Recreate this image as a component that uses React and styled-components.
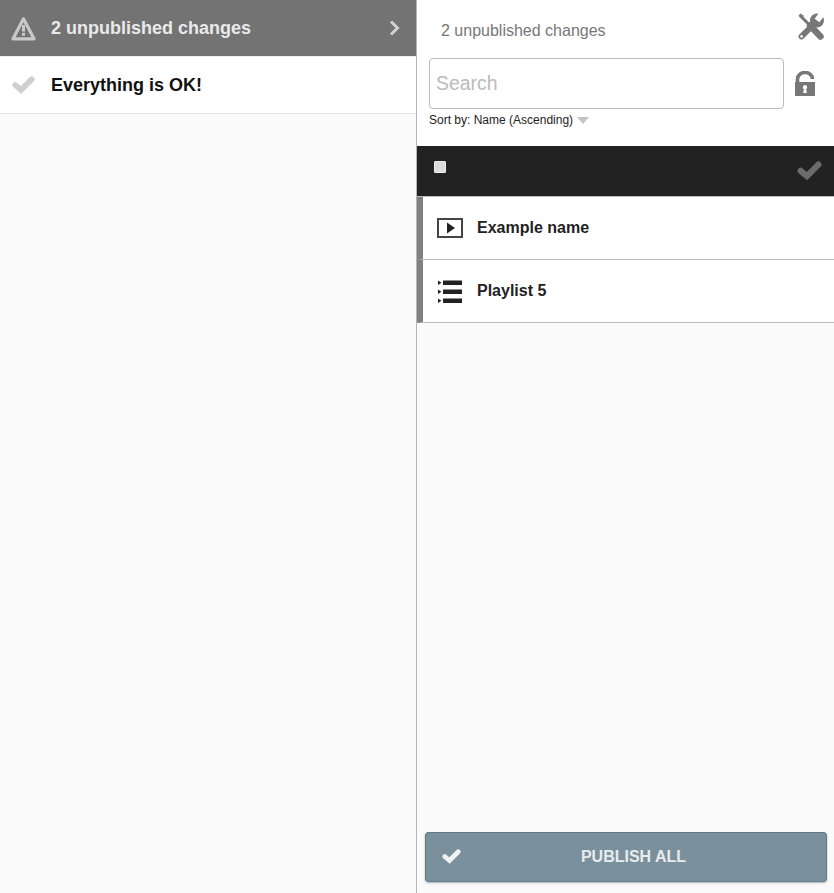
import React from "react";
import styled, { createGlobalStyle } from "styled-components";

const Global = createGlobalStyle`
  html, body { margin: 0; padding: 0; height: 100%; }
  body { font-family: "Liberation Sans", Arial, sans-serif; background: #fafafa; }
  * { box-sizing: border-box; }
`;

const Page = styled.div`
  display: grid;
  grid-template-columns: 416px 418px;
  height: 893px;
  overflow: hidden;
`;

const Sidebar = styled.aside`
  display: flex;
  flex-direction: column;
  background: #fafafa;
`;

const SideHeader = styled.div`
  display: flex;
  align-items: center;
  height: 57px;
  padding: 0 16px 0 11px;
  background: #737373;
  border-bottom: 1px solid #eee;
  color: #e9e9e9;
`;

const SideTitle = styled.span`
  flex: 1;
  margin-left: 15px;
  font-size: 18px;
  font-weight: bold;
`;

const SideRow = styled.div`
  display: flex;
  align-items: center;
  height: 57px;
  padding: 0 0 0 12px;
  background: #fff;
  border-bottom: 1px solid #e3e3e3;
`;

const SideText = styled.span`
  margin-left: 16px;
  font-size: 18px;
  font-weight: bold;
  color: #111;
`;

const Main = styled.main`
  display: flex;
  flex-direction: column;
  border-left: 1px solid #b5b5b5;
  background: #fafafa;
`;

const Top = styled.div`
  height: 146px;
  padding: 13px 10px 0 12px;
  background: #fff;
`;

const TitleRow = styled.div`
  display: flex;
  justify-content: space-between;
  height: 45px;
  padding-left: 12px;
`;

const Title = styled.h1`
  margin: 8px 0 0;
  font-size: 16px;
  line-height: 19px;
  font-weight: normal;
  color: #777;
`;

const SearchRow = styled.div`
  display: flex;
  align-items: center;
  gap: 10px;
`;

const SearchInput = styled.input`
  width: 355px;
  height: 51px;
  padding: 0 6px;
  border: 1px solid #bbb;
  border-radius: 4px;
  outline: none;
  font-family: inherit;
  font-size: 19.4px;
  background: #fff;

  &::placeholder {
    color: #bbb;
    opacity: 1;
  }
`;

const SortRow = styled.div`
  display: flex;
  align-items: center;
  gap: 4px;
  margin-top: 4px;
  font-size: 12px;
  line-height: 14px;
  color: #222;
`;

const Caret = styled.span`
  width: 0;
  height: 0;
  margin-top: 1px;
  border-left: 6.5px solid transparent;
  border-right: 6.5px solid transparent;
  border-top: 7px solid #c4c4c4;
`;

const ListBar = styled.div`
  display: flex;
  align-items: center;
  justify-content: space-between;
  height: 51px;
  padding: 0 12px 1px 17px;
  background: #222;
  border-bottom: 1px solid #bbb;
`;

const Box = styled.span`
  display: block;
  width: 12px;
  height: 12px;
  margin-bottom: 8px;
  border-radius: 1px;
  background: #dcdcdc;
  border: 1px solid #efefef;
`;

const Row = styled.div`
  display: flex;
  align-items: center;
  height: 63px;
  padding-left: 14px;
  background: #fff;
  border-left: 6px solid #808080;
  border-bottom: 1px solid #bbb;
`;

const RowIcon = styled.span`
  display: flex;
  width: 26px;
  margin-right: 14px;
`;

const RowName = styled.span`
  font-size: 16px;
  font-weight: bold;
  color: #222;
`;

const Footer = styled.div`
  margin-top: auto;
  padding: 0 7px 11px 8px;
`;

const PublishButton = styled.button`
  position: relative;
  display: block;
  width: 100%;
  height: 50px;
  border: 1px solid #5d7a8a;
  border-bottom-color: #64808f;
  border-radius: 4px;
  background: #7a909c;
  box-shadow: 0 1px 2px rgba(0, 0, 0, 0.3);
  color: #e8ebed;
  font-family: inherit;
  font-size: 16px;
  font-weight: bold;
  padding: 0 0 0 15px;
`;

const ButtonCheck = styled.span`
  position: absolute;
  left: 16px;
  top: 16px;
  display: flex;
`;

const CheckIcon = ({ width, color }) => (
  <svg width={width} viewBox="0 0 24 19">
    <path
      d="M3.5 9.5 9.5 14.5 20.5 3.5"
      fill="none"
      stroke={color}
      strokeWidth="6"
      strokeLinecap="round"
    />
  </svg>
);

const ChevronIcon = () => (
  <svg width="11" height="16" viewBox="0 0 11 16">
    <path d="M2 1.5 8.5 8 2 14.5" fill="none" stroke="#d2d2d2" strokeWidth="3" />
  </svg>
);

const WarningIcon = () => (
  <svg width="25" height="25" viewBox="0 0 25 25">
    <path d="M12.5 2.8 23 22.8H2Z" fill="none" stroke="#c9c9c9" strokeWidth="3.2" strokeLinejoin="round" />
    <rect x="11" y="9" width="3" height="6.6" fill="#c9c9c9" />
    <rect x="11" y="16.8" width="3" height="3" fill="#c9c9c9" />
  </svg>
);

const ToolsIcon = () => (
  <svg width="26" height="27" viewBox="0 0 26 27">
    <path d="M2 2.5 13 13.5" stroke="#777" strokeWidth="3" fill="none" />
    <path d="M0.5 2.5 2.5 0.5 6 3 4 5Z" fill="#777" />
    <path d="M12 12.5 22.5 23.5" stroke="#777" strokeWidth="6.5" strokeLinecap="round" fill="none" />
    <path d="M3.5 23.5 15 12" stroke="#777" strokeWidth="6" strokeLinecap="round" fill="none" />
    <circle cx="19" cy="7.5" r="7" fill="#777" />
    <path d="M19 7.5 24 1" stroke="#fff" strokeWidth="6" fill="none" />
    <circle cx="3.6" cy="23.4" r="1.3" fill="#fff" />
  </svg>
);

const LockIcon = () => (
  <svg width="22" height="25" viewBox="0 0 22 25">
    <path d="M3.5 11V8a7.5 6.5 0 0 1 15 0" fill="none" stroke="#777" strokeWidth="3.6" />
    <path
      fillRule="evenodd"
      fill="#777"
      d="M1 11H21V25H1ZM11 14A2.2 2.2 0 0 0 9.9 18.1L9.2 22H12.8L12.1 18.1A2.2 2.2 0 0 0 11 14Z"
    />
  </svg>
);

const VideoIcon = () => (
  <svg width="26" height="20" viewBox="0 0 26 20">
    <rect x="1" y="1" width="24" height="18" fill="none" stroke="#444" strokeWidth="2" />
    <path d="M10 4.5 18 10 10 15.5Z" fill="#222" />
  </svg>
);

const PlaylistIcon = () => (
  <svg width="26" height="25" viewBox="0 0 26 25" fill="#222">
    <rect x="6" y="1.5" width="19" height="4.5" />
    <rect x="6" y="10.5" width="19" height="4.5" />
    <rect x="6" y="19.5" width="19" height="4.5" />
    <path d="M1 1.5 4.5 3.8 1 6Z" />
    <path d="M1 10.5 4.5 12.8 1 15Z" />
    <path d="M1 19.5 4.5 21.8 1 24Z" />
  </svg>
);

const items = [
  { name: "Example name", icon: <VideoIcon /> },
  { name: "Playlist 5", icon: <PlaylistIcon /> },
];

const App = () => (
  <Page>
    <Global />
    <Sidebar>
      <SideHeader>
        <WarningIcon />
        <SideTitle>2 unpublished changes</SideTitle>
        <ChevronIcon />
      </SideHeader>
      <SideRow>
        <CheckIcon width={23} color="#cfcfcf" />
        <SideText>Everything is OK!</SideText>
      </SideRow>
    </Sidebar>
    <Main>
      <Top>
        <TitleRow>
          <Title>2 unpublished changes</Title>
          <ToolsIcon />
        </TitleRow>
        <SearchRow>
          <SearchInput placeholder="Search" />
          <LockIcon />
        </SearchRow>
        <SortRow>
          Sort by: Name (Ascending)
          <Caret />
        </SortRow>
      </Top>
      <ListBar>
        <Box />
        <CheckIcon width={25} color="#6b6b6b" />
      </ListBar>
      {items.map((item) => (
        <Row key={item.name}>
          <RowIcon>{item.icon}</RowIcon>
          <RowName>{item.name}</RowName>
        </Row>
      ))}
      <Footer>
        <PublishButton>
          <ButtonCheck>
            <CheckIcon width={19} color="#f0f2f3" />
          </ButtonCheck>
          PUBLISH ALL
        </PublishButton>
      </Footer>
    </Main>
  </Page>
);

export default App;
